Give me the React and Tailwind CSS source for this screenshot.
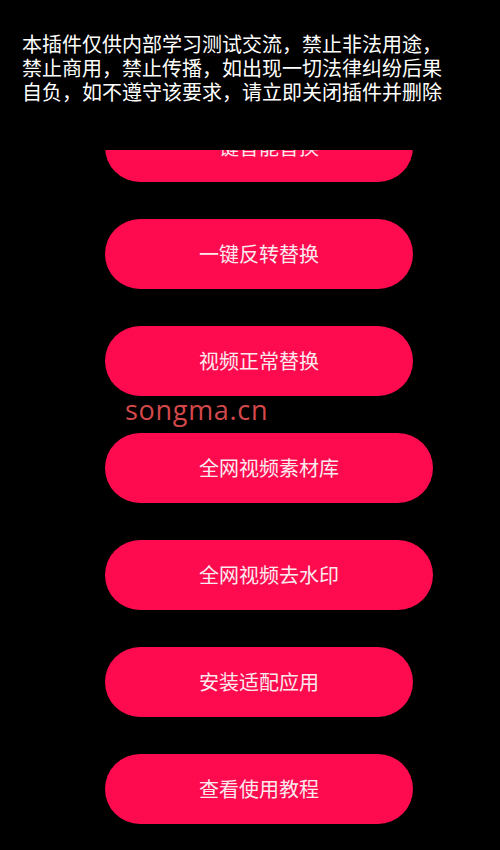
const buttons = [
  "一键智能替换",
  "一键反转替换",
  "视频正常替换",
  "全网视频素材库",
  "全网视频去水印",
  "安装适配应用",
  "查看使用教程",
];

export default function App() {
  return (
    <div
      className="relative h-[850px] w-[500px] overflow-hidden bg-black"
      style={{ fontFamily: '"Noto Sans CJK SC", "Noto Sans", sans-serif' }}
    >
      {/* notice */}
      <div className="relative z-10 h-[150px] bg-black pl-[22px] pt-[32px]">
        <p className="w-[432px] text-[20px] leading-[24px] text-white">
          本插件仅供内部学习测试交流，禁止非法用途，禁止商用，禁止传播，如出现一切法律纠纷后果自负，如不遵守该要求，请立即关闭插件并删除
        </p>
      </div>

      {/* button list, scrolled under the notice */}
      <div className="-mt-[38px] flex flex-col items-start gap-[37px] pl-[105px]">
        {buttons.map((label) => (
          <button
            key={label}
            className="flex h-[70px] items-center justify-center rounded-full bg-[#fe0b4f] px-[94px] text-[20px] leading-none text-[#fbe9ee]"
          >
            {label}
          </button>
        ))}
      </div>

      {/* watermark */}
      <div
        className="absolute left-[125px] top-[390px] text-[27px] tracking-[0.7px] text-[#d4484a]"
        style={{ fontFamily: '"Open Sans", sans-serif' }}
      >
        songma.cn
      </div>
    </div>
  );
}
